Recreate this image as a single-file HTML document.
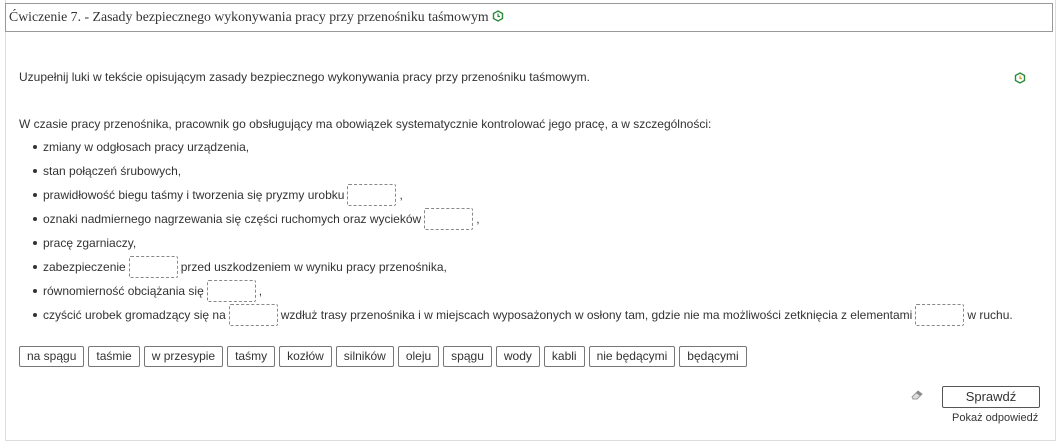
<!DOCTYPE html>
<html><head><meta charset="utf-8"><style>
*{margin:0;padding:0;box-sizing:border-box}
body{width:1060px;height:446px;background:#fff;font-family:"Liberation Sans",sans-serif;font-size:12px;color:#333;position:relative;overflow:hidden}
.outer{position:absolute;left:5px;top:0;width:1051px;height:441px;border-left:1px solid #ddd;border-right:1px solid #ddd;border-bottom:1px solid #ddd}
.hdr{position:absolute;left:5px;top:3px;width:1048px;height:29px;border:1px solid #999;font-family:"Liberation Serif",serif;font-size:13.8px;color:#333;padding:5px 0 0 3px;white-space:nowrap}
.t{position:absolute;white-space:nowrap;line-height:14px}
.li{position:absolute;left:43px;white-space:nowrap;line-height:14px;height:14px}
.li:before{content:"";position:absolute;left:-10px;top:5px;width:4px;height:4px;border-radius:50%;background:#333}
.gap{display:inline-block;width:49px;height:22px;border:1px dashed #888;vertical-align:top;margin:-4px 3px -4px 3px;border-radius:2px}
.chips{position:absolute;left:19px;top:346px;display:flex;gap:4px}
.chip{border:1px solid #777;border-radius:2px;height:21px;padding:0 7px;line-height:19px;font-size:12px;color:#333}
.btn{position:absolute;left:942px;top:386px;width:98px;height:22px;border:1px solid #555;border-radius:2px;text-align:center;line-height:20px;font-size:13px}
</style></head><body>
<div class="outer"></div>
<div class="hdr">Ćwiczenie 7. - Zasady bezpiecznego wykonywania pracy przy przenośniku taśmowym <svg width="12" height="12" viewBox="0 0 12 12" style="vertical-align:-1px"><polygon points="6,1 10.5,3.5 10.5,8.5 6,11 1.5,8.5 1.5,3.5" fill="none" stroke="#2a8a3a" stroke-width="1.4"/><path d="M6 3.5V6.5H8" stroke="#2a8a3a" stroke-width="1.2" fill="none"/></svg></div>
<div class="t" style="left:19px;top:70px">Uzupełnij luki w tekście opisującym zasady bezpiecznego wykonywania pracy przy przenośniku taśmowym.</div>
<svg style="position:absolute;left:1014px;top:72px" width="12" height="12" viewBox="0 0 12 12"><polygon points="6,1 10.5,3.5 10.5,8.5 6,11 1.5,8.5 1.5,3.5" fill="none" stroke="#2a8a3a" stroke-width="1.4"/><path d="M6 3.5V6.5H8" stroke="#c8a020" stroke-width="1.2" fill="none"/></svg>
<div class="t" style="left:19px;top:117px">W czasie pracy przenośnika, pracownik go obsługujący ma obowiązek systematycznie kontrolować jego pracę, a w szczególności:</div>
<div class="li" style="top:140px">zmiany w odgłosach pracy urządzenia,</div>
<div class="li" style="top:164px">stan połączeń śrubowych,</div>
<div class="li" style="top:188px">prawidłowość biegu taśmy i tworzenia się pryzmy urobku<span class="gap"></span>,</div>
<div class="li" style="top:212px">oznaki nadmiernego nagrzewania się części ruchomych oraz wycieków<span class="gap"></span>,</div>
<div class="li" style="top:236px">pracę zgarniaczy,</div>
<div class="li" style="top:260px">zabezpieczenie<span class="gap"></span>przed uszkodzeniem w wyniku pracy przenośnika,</div>
<div class="li" style="top:284px">równomierność obciążania się<span class="gap"></span>,</div>
<div class="li" style="top:308px">czyścić urobek gromadzący się na<span class="gap"></span>wzdłuż trasy przenośnika i w miejscach wyposażonych w osłony tam, gdzie nie ma możliwości zetknięcia z elementami<span class="gap"></span>w ruchu.</div>
<div class="chips"><div class="chip">na spągu</div><div class="chip">taśmie</div><div class="chip">w przesypie</div><div class="chip">taśmy</div><div class="chip">kozłów</div><div class="chip">silników</div><div class="chip">oleju</div><div class="chip">spągu</div><div class="chip">wody</div><div class="chip">kabli</div><div class="chip">nie będącymi</div><div class="chip">będącymi</div></div>
<svg style="position:absolute;left:910px;top:390px" width="14" height="10" viewBox="0 0 14 10"><path d="M2 7L8 1L12 4L7 9H3Z" fill="#ddd" stroke="#999"/><path d="M8 1L12 4L10 6L6 3Z" fill="#888"/></svg>
<div class="btn">Sprawdź</div>
<div class="t" style="left:952px;top:411px;font-size:11px">Pokaż odpowiedź</div>
</body></html>
